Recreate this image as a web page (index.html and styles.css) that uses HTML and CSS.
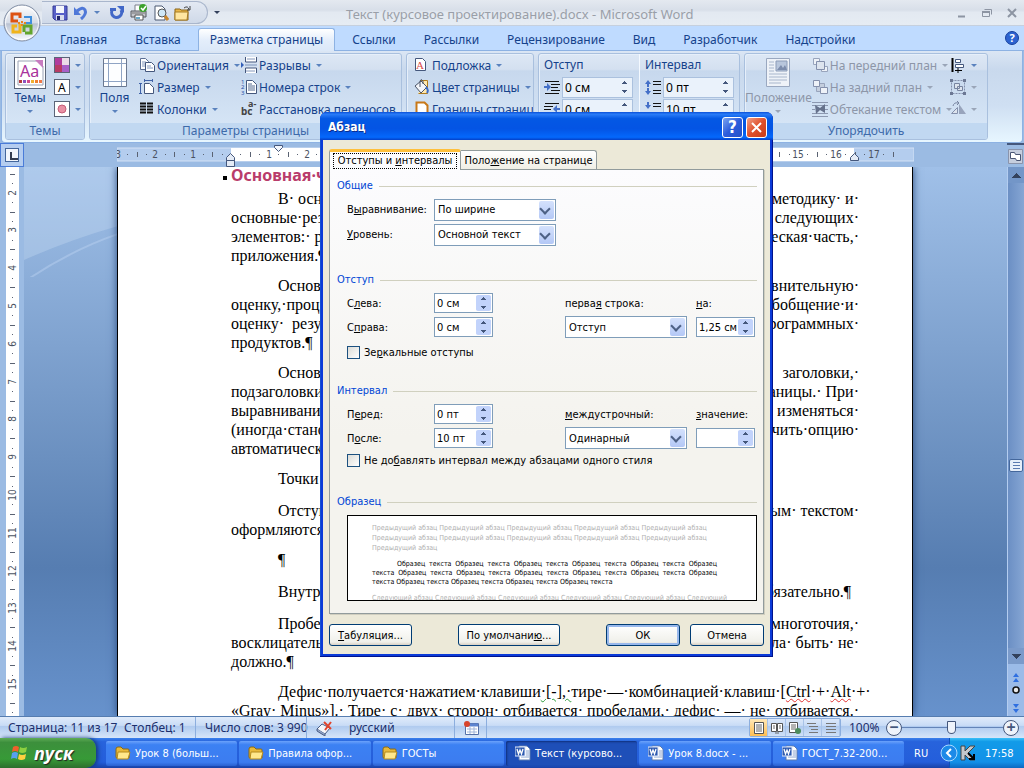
FILE: index.html
```html
<!DOCTYPE html>
<html lang="ru">
<head>
    <meta charset="UTF-8">
    <meta name="viewport" content="width=device-width, initial-scale=1.0">
    <title>Текст (курсовое проектирование).docx - Microsoft Word</title>
    <link rel="stylesheet" href="styles.css">
</head>
<body>

    <svg class="sprite" aria-hidden="true">
        <symbol id="i-folder" viewBox="0 0 16 16">
            <path d="M1 4q0-2 2-2h3l2 2h5q1 0 1 1v8H2q-1 0-1-1z" fill="#e8b93a" stroke="#8a6a14"/>
            <path d="M3 7h12l-2 7H2z" fill="#ffe88c" stroke="#b58a1c"/>
        </symbol>
        <symbol id="i-word" viewBox="0 0 16 16">
            <path d="M4 1h8l3 3v11H4z" fill="#fff" stroke="#5a7ab0"/>
            <path d="M11 6h3M11 8h3M11 10h3M6 12h8" stroke="#8aa4d0"/>
            <rect x="0" y="2" width="10" height="9" fill="#2f5bb0" stroke="#dfe8fa"/>
            <path d="M2 4l1.500 5L5 5l1.500 4L8 4" fill="none" stroke="#fff" stroke-width="1.300"/>
        </symbol>
    </svg>

    <header class="titlebar">
        <button class="office" aria-label="Office">
            <svg width="38" height="38" viewBox="0 0 38 38">
                <defs>
                    <linearGradient id="orb" x1="0" y1="0" x2="0" y2="1"><stop offset="0" stop-color="#fff"/><stop offset=".5" stop-color="#d5dbe6"/><stop offset=".52" stop-color="#b9c2d2"/><stop offset="1" stop-color="#fafcff"/></linearGradient>
                </defs>
                <circle cx="19" cy="19" r="18" fill="url(#orb)" stroke="#7f8ca3"/>
                <circle cx="19" cy="19" r="16.500" fill="none" stroke="#fff" opacity=".8"/>
                <g fill="none" stroke-width="3">
                    <path d="M15 17h-6V10h8v4" stroke="#dd5313"/>
                    <path d="M21 13h7v6h-5" stroke="#3f8fdc" stroke-width="2"/>
                    <path d="M17 20v8h-7v-6h4" stroke="#f0b41c"/>
                    <path d="M21 28v-6h7v7h-6" stroke="#62a52c"/>
                </g>
                <path d="M18 17h2v2h-2zM18 20h2v2h-2zM15 18h2v2h-2zM21 18h2v2h-2z" fill="#e88420"/>
            </svg>
        </button>
        <div class="qat">
            <button aria-label="Сохранить"><svg width="16" height="16" viewBox="0 0 16 16"><path d="M1 1h14v14H3l-2-2z" fill="#5860c8" stroke="#343a94"/><rect x="4" y="1" width="8" height="7" fill="#f4f6fc"/><rect x="4" y="10" width="8" height="5" fill="#d8dcec"/><rect x="5" y="11" width="3" height="4" fill="#22266c"/></svg></button>
            <button aria-label="Отменить"><svg width="16" height="16" viewBox="0 0 16 16"><path d="M4 6q6-5 8-1t-4 9" fill="none" stroke="#4f78d8" stroke-width="3"/><path d="M1 2v8h7z" fill="#4f78d8"/></svg><i class="arr"></i></button>
            <button aria-label="Вернуть"><svg width="16" height="16" viewBox="0 0 16 16"><path d="M4 4a5 5 0 1 0 8 1" fill="none" stroke="#4268c8" stroke-width="3"/><path d="M8 1h7v7z" fill="#4268c8"/><path d="M1 3h6v3H1z" fill="#4268c8"/></svg></button>
            <button aria-label="Печать"><svg width="18" height="18" viewBox="0 0 18 18"><path d="M5 7V1h6v6" fill="#fff" stroke="#7a7f8a"/><path d="M1 7h15v6H1z" fill="#c4c6cc" stroke="#55585f"/><path d="M2 9h13" stroke="#777"/><path d="M5 11h8v5H5z" fill="#fff" stroke="#555"/><path d="M6 13h4v2H6z" fill="#68a8c8"/><circle cx="13" cy="4" r="4" fill="#3ba02c"/><path d="M11 4l2 2 3-4" fill="none" stroke="#fff" stroke-width="1.500"/></svg></button>
            <button aria-label="Просмотр"><svg width="16" height="16" viewBox="0 0 16 16"><path d="M2 1h7l3 3v11H2z" fill="#fff" stroke="#4a5870"/><circle cx="9" cy="8" r="4" fill="#cfe8f8" stroke="#555"/><path d="M12 11l3 4" stroke="#c8862c" stroke-width="3"/></svg></button>
            <button aria-label="Открыть"><svg width="18" height="16" viewBox="0 0 18 16"><path d="M1 4h5l1 1h7v10H1z" fill="#e9b648" stroke="#8a6418"/><path d="M1 7h13l-1 8H1z" fill="#ffe6a0" stroke="#a67c24"/><path d="M10 3q4-3 5 2M16 1v4h-3" fill="none" stroke="#444"/></svg></button>
        </div>
        <button class="more" aria-label="Настройка панели"><i class="arr dark"></i></button>
        <h1>Текст (курсовое проектирование).docx - Microsoft Word</h1>
        <div class="winbtns">
            <button aria-label="Свернуть"><svg width="12" height="12"><path d="M2 9.500h7" stroke="#8d95a3" stroke-width="2"/></svg></button>
            <button aria-label="Восстановить"><svg width="12" height="12"><path d="M3.500 2.500h7v5M1.500 4.500h7v5h-7z" fill="none" stroke="#8d95a3"/><path d="M1 5h8" stroke="#8d95a3" stroke-width="2"/></svg></button>
            <button aria-label="Закрыть"><svg width="12" height="12"><path d="M2 2l8 8M10 2l-8 8" stroke="#8d95a3" stroke-width="2"/></svg></button>
        </div>
    </header>

    <nav class="tabs">
        <a href="#">Главная</a>
        <a href="#">Вставка</a>
        <a href="#" class="active">Разметка страницы</a>
        <a href="#">Ссылки</a>
        <a href="#">Рассылки</a>
        <a href="#">Рецензирование</a>
        <a href="#">Вид</a>
        <a href="#">Разработчик</a>
        <a href="#">Надстройки</a>
        <button class="help" aria-label="Справка">?</button>
    </nav>

    <div class="ribbon">
        <section class="group g-themes">
            <div class="tools">
                <button class="big">
                    <svg width="32" height="32" viewBox="0 0 32 32"><rect x=".5" y=".5" width="31" height="31" fill="#fff" stroke="#5a6478"/><path d="M4 4h20l5 5v19H4z" fill="#fff" stroke="#9aa2b4"/><path d="M21 3h8v8z" fill="#c87cc0"/><text x="6" y="20" font-size="16" fill="#a8329c" font-family="Noto Sans">Aa</text><path d="M5 24.500h3" stroke="#b83c3c" stroke-width="3"/><path d="M9 24.500h3" stroke="#8a54c0" stroke-width="3"/><path d="M13 24.500h3" stroke="#d04a8c" stroke-width="3"/><path d="M17 24.500h3" stroke="#f0b030" stroke-width="3"/><path d="M21 24.500h3" stroke="#f08030" stroke-width="3"/><path d="M25 24.500h3" stroke="#f07848" stroke-width="3"/></svg>
                    <span>Темы</span><i class="arr"></i>
                </button>
                <div class="col">
                    <button class="row"><svg width="16" height="16"><rect width="16" height="16" fill="#5a6478"/><path d="M1 1h7v7H1z" fill="#b03c9c"/><path d="M8 1h7v7H8z" fill="#ecdce8"/><path d="M1 8h7v7H1z" fill="#b83c64"/><path d="M8 8h7v7H8z" fill="#a860c8"/></svg><i class="arr"></i></button>
                    <button class="row"><svg width="16" height="16"><rect x=".5" y=".5" width="15" height="15" fill="#fff" stroke="#5a6478"/><text x="4" y="13" font-size="12" fill="#000" font-family="Noto Sans">A</text></svg><i class="arr"></i></button>
                    <button class="row"><svg width="16" height="16"><rect x=".5" y=".5" width="15" height="15" fill="#fff" stroke="#5a6478"/><circle cx="8" cy="8" r="4" fill="#e890a4" stroke="#c45c78"/></svg><i class="arr"></i></button>
                </div>
            </div>
            <h2>Темы</h2>
        </section>
        <section class="group g-page">
            <div class="tools">
                <button class="big">
                    <svg width="26" height="32" viewBox="0 0 26 32"><path d="M1.500 1.500h23v28h-23z" fill="#fdfeff" stroke="#6a7890"/><path d="M6.500 2v27M19.500 2v27M2 6.500h22M2 24.500h22" stroke="#8fa4c4"/></svg>
                    <span>Поля</span><i class="arr"></i>
                </button>
                <div class="col">
                    <button class="row"><svg width="16" height="16"><path d="M1.500 1.500h5l3 3v8h-8z" fill="#fff" stroke="#5c6f94"/><path d="M3 5h4M3 7h4M3 9h4" stroke="#8498bc"/><path d="M6.500 5.500h6l3 3v6h-9z" fill="#fff" stroke="#44577c"/><path d="M8 9h4M8 11h6" stroke="#8498bc"/></svg><span>Ориентация</span><i class="arr"></i></button>
                    <button class="row"><svg width="16" height="16"><path d="M5 1.500h9M5.500 0v3M13.500 0v3M1.500 4v11M0 4.500h3M0 14.500h3" stroke="#3f62a8"/><path d="M5.500 4.500h5l4 4v6h-9z" fill="#fff" stroke="#44577c"/></svg><span>Размер</span><i class="arr"></i></button>
                    <button class="row"><svg width="16" height="16"><path d="M1 2.500h6M1 5.500h6M1 8.500h6M1 11.500h6M8 2.500h6M8 5.500h6M8 8.500h6M8 11.500h6" stroke="#111" stroke-width="2"/></svg><span>Колонки</span><i class="arr"></i></button>
                </div>
                <div class="col">
                    <button class="row"><svg width="16" height="16"><path d="M4.500 0v5h11V0M4.500 16v-5h11v5" fill="#fff" stroke="#44577c"/><path d="M6 2h8M5 14h9" stroke="#8498bc"/><path d="M0 5v6l3-3z" fill="#3460b8"/><path d="M4 8h12" stroke="#7890b8"/></svg><span>Разрывы</span><i class="arr"></i></button>
                    <button class="row"><svg width="16" height="16"><text x="0" y="5" font-size="6" fill="#2850a8" font-family="Noto Sans">1</text><text x="0" y="10" font-size="6" fill="#2850a8" font-family="Noto Sans">2</text><text x="0" y="16" font-size="6" fill="#2850a8" font-family="Noto Sans">3</text><path d="M5.500 1.500h6l4 4v9h-10z" fill="#fff" stroke="#44577c"/><path d="M7 5h4M7 7h7M7 9h7M7 11h7" stroke="#556a90"/></svg><span>Номера строк</span><i class="arr"></i></button>
                    <button class="row"><svg width="16" height="16"><text x="0" y="14" font-size="10" font-weight="bold" fill="#444" font-family="Noto Sans">bc</text><text x="7" y="6" font-size="9" font-weight="bold" fill="#444" font-family="Noto Sans">a-</text></svg><span>Расстановка переносов</span><i class="arr"></i></button>
                </div>
            </div>
            <h2>Параметры страницы</h2>
        </section>
        <section class="group g-back">
            <div class="tools">
                <div class="col">
                    <button class="row"><svg width="16" height="16"><path d="M1.500 1.500h7l3 3v9h-10z" fill="#fff" stroke="#44577c"/><text x="2" y="12" font-size="11" fill="#d84a4a" font-family="Liberation Serif">A</text></svg><span>Подложка</span><i class="arr"></i></button>
                    <button class="row"><svg width="16" height="16"><path d="M6.500 1.500h7v13h-9" fill="#ffe9b0" stroke="#b07c20"/><path d="M1 7l6-5 6 6-6 6z" fill="#f4f6fa" stroke="#4a5468"/><path d="M6 8V2q1-3 3 0v3" fill="none" stroke="#4a5468"/><path d="M12 8q3 3 1 6" fill="none" stroke="#3c6cc8" stroke-width="2"/></svg><span>Цвет страницы</span><i class="arr"></i></button>
                    <button class="row"><svg width="16" height="16"><path d="M2.500 1.500h8l3 3v10h-11z" fill="#fff" stroke="#c87818" stroke-width="2"/></svg><span>Границы страниц</span></button>
                </div>
            </div>
            <h2>Фон страницы</h2>
        </section>
        <section class="group g-para">
            <div class="tools">
                <div class="col">
                    <span class="cap">Отступ</span>
                    <label class="row"><svg width="16" height="16"><path d="M1 2.500h14M7 5.500h9M7 8.500h7M7 11.500h9M1 14.500h14" stroke="#111"/><path d="M0 7h3V4l4 4-4 4V9H0z" fill="#4470c8"/></svg><span class="rspin"><input type="text" value="0 см" aria-label="Отступ слева"><i></i></span></label>
                    <label class="row"><svg width="16" height="16"><path d="M1 2.500h14M0 5.500h9M0 8.500h7M0 11.500h9M1 14.500h14" stroke="#111"/><path d="M16 7h-3V4L9 8l4 4V9h3z" fill="#4470c8"/></svg><span class="rspin"><input type="text" value="0 см" aria-label="Отступ справа"><i></i></span></label>
                </div>
                <div class="col sep">
                    <span class="cap">Интервал</span>
                    <label class="row"><svg width="16" height="16"><path d="M8 2.500h8M8 5.500h8M8 11.500h8M8 14.500h8" stroke="#111"/><path d="M0 5l3-4 3 4H4v3H2V5zM0 12l3 4 3-4H4V9H2v3z" fill="#4470c8"/></svg><span class="rspin"><input type="text" value="0 пт" aria-label="Интервал до"><i></i></span></label>
                    <label class="row"><svg width="16" height="16"><path d="M8 2.500h8M8 5.500h8M8 11.500h8M8 14.500h8" stroke="#111"/><path d="M0 4l3 4 3-4H4V1H2v3z" fill="#4470c8"/></svg><span class="rspin"><input type="text" value="10 пт" aria-label="Интервал после"><i></i></span></label>
                </div>
            </div>
            <h2>Абзац</h2>
        </section>
        <section class="group g-arrange">
            <div class="tools">
                <button class="big off">
                    <svg width="26" height="32" viewBox="0 0 26 32"><path d="M1.500 1.500h23v28h-23z" fill="#eef2f8" stroke="#9aa8c0"/><path d="M11 4h11v10H11z" fill="#b8c6dc" stroke="#8c9cb8"/><path d="M12 13l4-5 2 3 2-3 2 5z" fill="#7c8cac"/><path d="M4 5h5M4 8h5M4 11h5M4 14h5M4 17h18M4 20h18M4 23h18M4 26h12" stroke="#a8b6cc"/></svg>
                    <span>Положение</span><i class="arr"></i>
                </button>
                <div class="col">
                    <button class="row off"><svg width="16" height="16"><path d="M1.500 1.500h6v6h-6zM9.500 9.500h6v5h-6z" fill="#eef2f8" stroke="#98a4bc"/><path d="M4.500 4.500h8v8h-8z" fill="#dde4ee" stroke="#8490ac"/></svg><span>На передний план</span><i class="arr"></i></button>
                    <button class="row off"><svg width="16" height="16"><path d="M4.500 4.500h8v8h-8z" fill="#c4cede" stroke="#98a4bc"/><path d="M1.500 1.500h6v6h-6zM8.500 8.500h7v6h-7z" fill="#eef2f8" stroke="#8490ac"/></svg><span>На задний план</span><i class="arr"></i></button>
                    <button class="row off"><svg width="16" height="16"><path d="M0 1.500h16M0 4.500h16M0 12.500h16M0 15.500h16M0 8.500h3M13 8.500h3" stroke="#8c98b0"/><path d="M3 4l5 3 5-4v9l-5-3-4 4z" fill="#66728c"/></svg><span>Обтекание текстом</span><i class="arr"></i></button>
                </div>
                <div class="col">
                    <button class="row"><svg width="16" height="16"><path d="M2.500 1v14" stroke="#000" stroke-width="2"/><path d="M5.500 2.500h5v3h-5zM5.500 7.500h8v3h-8z" fill="#fff" stroke="#44577c"/><path d="M5 13.500h7M8 11v5" stroke="#000"/></svg><i class="arr"></i></button>
                    <button class="row off"><svg width="16" height="16"><path d="M1.500 1.500h13v13h-13z" fill="none" stroke="#8490ac" stroke-dasharray="2 1"/><path d="M4.500 4.500h5v5h-5zM7.500 7.500h5v4h-5z" fill="#dde4ee" stroke="#7884a0"/><path d="M0 0h3v3H0zM13 0h3v3h-3zM0 13h3v3H0zM13 13h3v3h-3z" fill="#6c7894"/></svg><i class="arr"></i></button>
                    <button class="row off"><svg width="16" height="16"><path d="M1.500 12.500l6-6v6z" fill="#dde4ee" stroke="#8490ac"/><path d="M9 3v10h7z" fill="#98a4bc"/><path d="M3 5q1-4 5-3M7 0l2 2-2 2" fill="none" stroke="#7884a0"/></svg><i class="arr"></i></button>
                </div>
            </div>
            <h2>Упорядочить</h2>
        </section>
    </div>

    <main class="work">
        <div class="tabsel"><span></span></div>
        <div class="hruler"><svg id="hruler" width="797" height="24"></svg></div>
        <div class="toggle"><svg width="15" height="15"><path d="M.5.500h14v14H.5z" fill="#c6cede" stroke="#8a94ac"/><path d="M2.500 3.500h4l1 2h5v6h-4l-1-2h-5z" fill="#fff" stroke="#4a5674"/></svg></div>
        <div class="vruler"><svg id="vruler" width="24" height="900"></svg></div>

        <div class="desk">
            <svg class="swoosh" viewBox="0 0 94 110" aria-hidden="true">
                <path d="M0 0h94v59Q45 73 0 93z" fill="#c8dcf4" opacity=".35"/>
                <path d="M0 115Q45 84 94 67" fill="none" stroke="#b8d0f0" stroke-width="2" opacity=".5"/>
            </svg>
            <article class="page">
                <h3>Основная·часть</h3>
                <div class="para">
                    <p><span>В· основной·</span><span>методику· и·</span></p>
                    <p><span>основные·результаты</span><span>следующих·</span></p>
                    <p><span>элементов:· раздел</span><span>теоретическая·часть,·</span></p>
                    <p><span>приложения.¶</span></p>
                </div>
                <div class="para">
                    <p><span>Основная</span><span>сравнительную·</span></p>
                    <p><span>оценку,·процесс</span><span>обобщение·и·</span></p>
                    <p><span>оценку·&nbsp; результатов</span><span>программных·</span></p>
                    <p><span>продуктов.¶</span></p>
                </div>
                <div class="para">
                    <p><span>Основные</span><span>заголовки,·</span></p>
                    <p><span>подзаголовки</span><span>страницы.· При·</span></p>
                    <p><span>выравнивании</span><span>изменяться·</span></p>
                    <p><span>(иногда·становится</span><span>включить·опцию·</span></p>
                    <p><span>автоматической</span></p>
                </div>
                <div class="para single">
                    <p><span>Точки</span></p>
                </div>
                <div class="para">
                    <p><span>Отступ</span><span>основным· текстом·</span></p>
                    <p><span>оформляются</span></p>
                </div>
                <div class="para single">
                    <p><span>¶</span></p>
                </div>
                <div class="para single">
                    <p><span>Внутри</span><span>обязательно.¶&nbsp;&nbsp;</span></p>
                </div>
                <div class="para">
                    <p><span>Пробел</span><span>многоточия,·</span></p>
                    <p><span>восклицательный</span><span>пробела· быть· не·</span></p>
                    <p><span>должно.¶</span></p>
                </div>
                <div class="para">
                    <p><span>Дефис·</span><span>получается·</span><span>нажатием·</span><span>клавиши<span class="grammar">·[-],·</span></span><span>тире·</span><span>—·</span><span>комбинацией·</span><span>клавиш·</span><span>[<span class="spell">Ctrl</span>·</span><span>+·</span><span><span class="spell">Alt</span>·</span><span>+·</span></p>
                    <p><span>«Gray·</span><span>Minus»].·</span><span>Тире·</span><span>с·</span><span>двух·</span><span>сторон·</span><span>отбивается·</span><span>пробелами,·</span><span>дефис·</span><span>—·</span><span>не·</span><span>отбивается.·</span></p>
                </div>
            </article>
        </div>

        <div class="scroll">
            <i class="up"></i>
            <div class="track"><div class="thumb"></div></div>
            <i class="down"></i>
            <svg width="16" height="52"><path d="M5 13l3-4 3 4zM5 18l3-4 3 4zM5 40l3 4 3-4zM5 45l3 4 3-4z" fill="#2f6fe0"/><circle cx="8" cy="26" r="3" fill="#e8e8e8" stroke="#111" stroke-width="1.500"/></svg>
        </div>
    </main>

    <footer class="status">
        <span class="st-page">Страница: 11 из 17</span>
        <span class="st-col">Столбец: 1</span>
        <span class="st-words">Число слов: 3 990</span>
        <span class="st-lang"><svg width="18" height="16"><path d="M1 9l5-5 8 4-5 6z" fill="#f4f6fa" stroke="#4a5c84"/><path d="M1 9v2l8 5v-2" fill="#90a4c8" stroke="#4a5c84"/><path d="M8 2l7 7M15 2l-6 8" stroke="#e0442c" stroke-width="2"/></svg>русский</span>
        <span class="st-macro"><svg width="16" height="14"><path d="M1.500 2.500h13v11h-13z" fill="#fff" stroke="#5470a8"/><path d="M2 4h12" stroke="#5c84d0" stroke-width="3"/><path d="M3 8h10M3 11h10M6 6v7M10 6v7" stroke="#a0b4d8"/><circle cx="3" cy="3" r="3" fill="#d8442c"/></svg></span>
        <div class="views">
            <button class="on" aria-label="Разметка страницы"><svg width="12" height="12"><path d="M1.500.500h9v11h-9z" fill="#fff" stroke="#555"/><path d="M3 3h6M3 5h6M3 7h6M3 9h6" stroke="#666"/></svg></button>
            <button aria-label="Режим чтения"><svg width="12" height="12"><path d="M.5 1.500h5v8h-5zM6.500 1.500h5v8h-5z" fill="#fff" stroke="#555"/><path d="M2 4h2M2 6h2M8 4h2M8 6h2M4 11h4" stroke="#666"/></svg></button>
            <button aria-label="Веб-документ"><svg width="12" height="12"><path d="M.5.500h8v10h-8z" fill="#fff" stroke="#555"/><path d="M2 3h5M2 5h5M2 7h5" stroke="#666"/><circle cx="9" cy="9" r="3" fill="#4c8c5c"/></svg></button>
            <button aria-label="Структура"><svg width="12" height="12"><path d="M0 1.500h9M2 4.500h9M4 7.500h7M2 10.500h9" stroke="#777"/></svg></button>
            <button aria-label="Черновик"><svg width="12" height="12"><path d="M1 1.500h10M1 4.500h10M1 7.500h10M1 10.500h10" stroke="#777"/></svg></button>
        </div>
        <span class="pct">100%</span>
        <button class="zoom" aria-label="Уменьшить">−</button>
        <input class="slider" type="range" min="0" max="100" value="49" aria-label="Масштаб">
        <button class="zoom" aria-label="Увеличить">+</button>
    </footer>

    <div class="taskbar">
        <button class="start"><svg width="20" height="20" viewBox="0 0 20 20"><path d="M3 4q3-2 6 0L8 9Q5 7 2 9z" fill="#f0602c"/><path d="M10 4q3 2 7 0l-1 5q-4 2-7 0z" fill="#8cd040"/><path d="M2 10q3-2 6 0l-1 6q-3-2-6 0z" fill="#58a0f0"/><path d="M9 11q3 2 7 0l-1 5q-4 2-7 0z" fill="#ffd040"/></svg>пуск</button>
        <div class="tasks">
            <button><svg width="16" height="16"><use href="#i-folder"/></svg>Урок 8 (больш...</button>
            <button><svg width="16" height="16"><use href="#i-folder"/></svg>Правила офор...</button>
            <button><svg width="16" height="16"><use href="#i-folder"/></svg>ГОСТы</button>
            <button class="active"><svg width="16" height="16"><use href="#i-word"/></svg>Текст (курсово...</button>
            <button><svg width="16" height="16"><use href="#i-word"/></svg>Урок 8.docx - ...</button>
            <button><svg width="16" height="16"><use href="#i-word"/></svg>ГОСТ_7.32-200...</button>
        </div>
        <span class="lang">RU</span>
        <div class="tray">
            <svg class="chev" width="18" height="18"><circle cx="9" cy="9" r="8" fill="#1c8ae8" stroke="#a8d8ff"/><path d="M11 5L7 9l4 4" fill="none" stroke="#fff" stroke-width="2"/></svg>
            <svg width="16" height="16"><path d="M1 1h4v5l5-5h5L8 8l7 7h-5L5 10v5H1z" fill="#c4c8cc" stroke="#444"/><path d="M8 8l5 5M14 9v5H9" fill="none" stroke="#000" stroke-width="2"/></svg>
            <time>17:58</time>
        </div>
    </div>

    <form class="dialog" role="dialog" aria-labelledby="dlg-title">
        <div class="dlg-head">
            <h2 id="dlg-title">Абзац</h2>
            <button type="button" class="q" aria-label="Справка">?</button>
            <button type="button" class="x" aria-label="Закрыть"><svg width="19" height="19"><path d="M5 5l9 9M14 5l-9 9" stroke="#fff" stroke-width="2"/></svg></button>
        </div>
        <div class="dlg-body">
            <div class="dlg-tabs">
                <button type="button" class="active"><span>Отступы и <u>и</u>нтервалы</span></button>
                <button type="button">Поло<u>ж</u>ение на странице</button>
            </div>
            <div class="panel">
                <fieldset class="f-common">
                    <legend>Общие</legend>
                    <div class="line">
                        <label for="align">В<u>ы</u>равнивание:</label>
                        <span class="combo"><select id="align"><option>По ширине</option></select></span>
                    </div>
                    <div class="line">
                        <label for="level"><u>У</u>ровень:</label>
                        <span class="combo"><select id="level"><option>Основной текст</option></select></span>
                    </div>
                </fieldset>
                <fieldset class="f-indent">
                    <legend>Отступ</legend>
                    <div class="line">
                        <label for="left">С<u>л</u>ева:</label>
                        <span class="spin"><input type="text" id="left" value="0 см"><i></i></span>
                        <label for="first">перва<u>я</u> строка:</label>
                        <label for="by"><u>н</u>а:</label>
                    </div>
                    <div class="line">
                        <label for="right">С<u>п</u>рава:</label>
                        <span class="spin"><input type="text" id="right" value="0 см"><i></i></span>
                        <span class="combo"><select id="first"><option>Отступ</option></select></span>
                        <span class="spin"><input type="text" id="by" value="1,25 см"><i></i></span>
                    </div>
                    <label class="check"><input type="checkbox"><span>Зе<u>р</u>кальные отступы</span></label>
                </fieldset>
                <fieldset class="f-spacing">
                    <legend>Интервал</legend>
                    <div class="line">
                        <label for="before">П<u>е</u>ред:</label>
                        <span class="spin"><input type="text" id="before" value="0 пт"><i></i></span>
                        <label for="leading"><u>м</u>еждустрочный:</label>
                        <label for="value"><u>з</u>начение:</label>
                    </div>
                    <div class="line">
                        <label for="after">П<u>о</u>сле:</label>
                        <span class="spin"><input type="text" id="after" value="10 пт"><i></i></span>
                        <span class="combo"><select id="leading"><option>Одинарный</option></select></span>
                        <span class="spin"><input type="text" id="value"><i></i></span>
                    </div>
                    <label class="check"><input type="checkbox"><span>Не до<u>б</u>авлять интервал между абзацами одного стиля</span></label>
                </fieldset>
                <fieldset class="f-preview">
                    <legend>Образец</legend>
                    <div class="preview">
                        <p>Предыдущий абзац Предыдущий абзац Предыдущий абзац Предыдущий абзац Предыдущий абзац<br>Предыдущий абзац Предыдущий абзац Предыдущий абзац Предыдущий абзац Предыдущий абзац<br>Предыдущий абзац</p>
                        <p class="sample">Образец текста Образец текста Образец текста Образец текста Образец текста Образец текста Образец текста Образец текста Образец текста Образец текста Образец текста Образец текста Образец текста Образец текста Образец текста Образец текста</p>
                        <p>Следующий абзац Следующий абзац Следующий абзац Следующий абзац Следующий абзац Следующий</p>
                    </div>
                </fieldset>
            </div>
            <div class="dlg-foot">
                <button type="button" class="b-tab"><u>Т</u>абуляция...</button>
                <button type="button" class="b-def">По умолчани<u>ю</u>...</button>
                <button type="button" class="b-ok">ОК</button>
                <button type="button" class="b-cancel">Отмена</button>
            </div>
        </div>
    </form>

    <script src="script.js"></script>
</body>
</html>
```
FILE: styles.css
```css
* {
    box-sizing: border-box;
}
body {
    margin: 0;
    height: 100vh;
    display: flex;
    flex-direction: column;
    position: relative;
    overflow: hidden;
    font-family: "Noto Sans", "Open Sans", sans-serif;
    font-size: 12px;
    color: #15428b;
    background: #9bbbe3;
}
button {
    font: inherit;
    color: inherit;
    background: none;
    border: 0;
    padding: 0;
}
h1, h2, h3, p, fieldset {
    margin: 0;
    padding: 0;
    font-weight: normal;
}
svg {
    flex: none;
    display: block;
}
.sprite {
    display: none;
}
.arr {
    flex: none;
    width: 0;
    height: 0;
    border: 3px solid transparent;
    border-top-color: #5a82be;
    border-bottom: 0;
}
.arr.dark {
    border-top-color: #33415c;
}

/* title bar */
.titlebar {
    flex: none;
    height: 26px;
    display: flex;
    align-items: center;
    position: relative;
    padding-left: 42px;
    background: linear-gradient(#e4e9f0, #d8dfe9 40%, #e3e9f1 50%, #e6ecf3);
    border-bottom: 1px solid #c6d0de;
}
.office {
    position: absolute;
    left: 3px;
    top: 4px;
    z-index: 2;
}
.qat {
    height: 23px;
    width: 166px;
    display: flex;
    align-items: center;
    gap: 5px;
    padding-left: 10px;
    border: 1px solid #a9b6cc;
    border-left: 0;
    border-radius: 0 12px 12px 0;
    background: linear-gradient(#e3e9f3, #cfd9e8);
}
.qat button {
    display: flex;
    align-items: center;
    gap: 5px;
}
.qat button:nth-child(2) {
    margin-right: 4px;
}
.more {
    padding: 3px 6px;
}
.more .arr {
    display: block;
    box-shadow: 0 -5px 0 -3px #33415c;
}
.titlebar h1 {
    flex: 1;
    padding-left: 120px;
    padding-top: 3px;
    font-size: 13px;
    color: #9a9fa8;
    white-space: nowrap;
}
.winbtns {
    display: flex;
    gap: 13px;
    padding-right: 6px;
}

/* ribbon tabs */
.tabs {
    flex: none;
    height: 25px;
    display: flex;
    gap: 6px;
    padding: 2px 5px 0 49px;
    background: #bfdbff;
    border-bottom: 1px solid #8db2e3;
}
.tabs a {
    height: 23px;
    padding: 0 11px;
    line-height: 23px;
    color: #15428b;
    text-decoration: none;
    white-space: nowrap;
}
.tabs a.active {
    border: 1px solid #8db2e3;
    border-bottom: 0;
    border-radius: 3px 3px 0 0;
    background: linear-gradient(#fff, #e4eefb 50%, #dbe8f8);
    line-height: 22px;
}
.help {
    margin: 3px 0 0 auto;
    width: 14px;
    height: 14px;
    border-radius: 50%;
    border: 1px solid #16409c;
    background: #2c62d0;
    color: #fff;
    font-size: 11px;
    font-weight: bold;
    line-height: 12px;
}

/* ribbon */
.ribbon {
    flex: none;
    height: 92px;
    display: flex;
    gap: 4px;
    margin: 0 1px;
    padding: 2px 3px;
    border: 1px solid #8db2e3;
    border-top: 0;
    border-radius: 0 0 4px 4px;
    background: linear-gradient(#dbe6f4, #c9d9ed 20%, #cfdff2 60%, #e7f6ff);
}
.group {
    flex: none;
    display: flex;
    flex-direction: column;
    overflow: hidden;
    border: 1px solid #a9c0de;
    border-radius: 3px;
    box-shadow: inset 1px 1px 0 #e6effa;
    background: linear-gradient(#dde8f5, #d4e0f0 18%, #c7d8ed 20%, #d9e8f8);
}
.g-themes { width: 80px; }
.g-page { width: 313px; }
.g-back { width: 128px; }
.g-para { width: 202px; }
.g-arrange { width: 244px; }
.tools {
    flex: 1;
    display: flex;
}
.group h2 {
    height: 16px;
    font-size: 12px;
    line-height: 16px;
    text-align: center;
    color: #3e6aaa;
    background: #c1d8f1;
}
.big {
    width: 46px;
    display: flex;
    flex-direction: column;
    align-items: center;
    padding-top: 3px;
}
.big span {
    line-height: 18px;
}
.big .arr {
    margin-top: 3px;
}
.off {
    color: #8d96a8;
}
.off .arr {
    border-top-color: #9aa5b8;
}
.col {
    display: flex;
    flex-direction: column;
}
.row {
    height: 22px;
    display: flex;
    align-items: center;
    gap: 2px;
    white-space: nowrap;
}
.row .arr {
    margin-left: 3px;
}
.g-themes .big { width: 48px; }
.g-page .big { width: 49px; }
.g-page .col { width: 102px; }
.g-back .col { padding-left: 7px; }
.g-arrange .big { width: 72px; }
.g-arrange .col { width: 138px; }
.g-para .col {
    width: 101px;
    padding-left: 5px;
}
.g-para .sep {
    border-left: 1px solid #f4f9ff;
}
.cap {
    height: 22px;
    line-height: 22px;
}
.rspin {
    display: flex;
    align-items: center;
    width: 71px;
    height: 21px;
    border: 1px solid #abc1de;
    background: #eaf2fb;
}
.rspin input {
    flex: 1;
    min-width: 0;
    border: 0;
    padding: 0 2px;
    background: none;
    font: inherit;
    color: #000;
}
.rspin i, .spin i {
    flex: none;
    width: 16px;
    height: 12px;
    background:
        conic-gradient(from 135deg at 50% 0, #44577c 90deg, transparent 0) center top / 7px 3px no-repeat,
        conic-gradient(from -45deg at 50% 100%, #44577c 90deg, transparent 0) center bottom / 7px 3px no-repeat;
}

/* work area */
.work {
    flex: 1;
    min-height: 0;
    display: grid;
    grid-template-columns: 24px 1fr 17px;
    grid-template-rows: 24px 1fr;
}
.tabsel {
    display: grid;
    place-items: center;
    border: 1px solid #4a7cd8;
    background: #b4cdf0;
}
.tabsel span {
    width: 14px;
    height: 14px;
    border: 1px solid #44679c;
    background: #f2f6fc;
}
.tabsel span::before {
    content: "";
    display: block;
    width: 6px;
    height: 6px;
    margin: 3px 0 0 4px;
    border: solid #333c50;
    border-width: 0 0 2px 2px;
}
.hruler {
    padding-left: 93px;
    overflow: hidden;
}
.toggle {
    border-top: 2px solid #44577c;
    padding: 4px 1px 0;
}
.vruler {
    overflow: hidden;
}
.hruler text, .vruler text {
    font-family: "DejaVu Sans Condensed", "DejaVu Sans", sans-serif;
    font-size: 10px;
    fill: #4a5262;
}
.desk {
    position: relative;
    min-height: 0;
    overflow: hidden;
    padding: 0 94px 0 93px;
    background: linear-gradient(#a0c0e8, #6b90c0 53%, #567db1 73%, #6792cc);
}
.swoosh {
    position: absolute;
    left: 0;
    top: 0;
    width: 94px;
    height: 110px;
}
.page {
    position: relative;
    height: 100%;
    padding: 0 53px 0 113px;
    overflow: hidden;
    border: solid #000;
    border-width: 0 1px;
    background: #fff;
    box-shadow: 0 0 8px #2a4a7c;
    font-family: "Liberation Serif", serif;
    font-size: 16px;
    color: #000;
}
.page h3 {
    height: 22px;
    line-height: 17px;
    font-family: "Noto Sans", sans-serif;
    font-size: 16px;
    font-weight: bold;
    color: #b93c6b;
}
.page h3::before {
    content: "";
    float: left;
    width: 4px;
    height: 4px;
    margin: 9px 0 0 -8px;
    background: #000;
}
.para {
    margin-bottom: 11px;
    line-height: 19px;
}
.para.single {
    margin-bottom: 13px;
}
.para p {
    display: flex;
    justify-content: space-between;
    white-space: nowrap;
}
.para p:first-child {
    padding-left: 47px;
}
.spell {
    text-decoration: underline wavy #e03030 1px;
}
.grammar {
    text-decoration: underline wavy #2c9c3c 1px;
}
.scroll {
    display: flex;
    flex-direction: column;
    align-items: center;
    border-left: 1px solid #b4cdf0;
    background: #9bbbe8;
}
.scroll .up, .scroll .down {
    width: 100%;
    height: 16px;
    background: #7396c8 conic-gradient(from 135deg at 50% 0, #33415c 90deg, transparent 0) center / 9px 5px no-repeat;
}
.scroll .down {
    background: #7a9aca conic-gradient(from -45deg at 50% 100%, #33415c 90deg, transparent 0) center / 9px 5px no-repeat;
}
.track {
    flex: 1;
    width: 100%;
    padding-top: 276px;
    background: linear-gradient(90deg, #6b8fc4, #86a6d4);
}
.thumb {
    height: 13px;
    margin: 0 1px;
    border: 1px solid #44679c;
    border-radius: 2px;
    background: repeating-linear-gradient(#5a7ab0 0 1px, #eaf1fb 1px 3px) center / 7px 7px no-repeat, #e4edf9;
}

/* status bar */
.status {
    flex: none;
    height: 22px;
    display: flex;
    align-items: center;
    padding: 0 5px 0 8px;
    border-top: 1px solid #567db0;
    background: linear-gradient(#e0ebfa, #c9dcf6 40%, #b0cbef 45%, #d6e5f9);
    color: #1c2f6c;
    white-space: nowrap;
}
.status > span {
    display: flex;
    align-items: center;
    height: 100%;
}
.st-page { width: 116px; }
.st-col { width: 71px; }
.st-words { width: 111px; }
.st-lang { width: 148px; gap: 15px; }
.st-macro { width: 33px; }
.status .st-words, .status .st-lang, .status .st-macro {
    padding-left: 9px;
    border-left: 1px solid #8caede;
}
.status .st-macro {
    border-right: 1px solid #8caede;
}
.views {
    margin-left: auto;
    display: flex;
    border: 1px solid #8caede;
    border-radius: 2px;
}
.views button {
    width: 18px;
    height: 17px;
    display: grid;
    place-items: center;
    border-right: 1px solid #a9c3e8;
}
.views .on {
    background: linear-gradient(#ffe8b8, #ffbe50);
}
.status .pct {
    width: 45px;
    padding-left: 8px;
}
.zoom {
    width: 16px;
    height: 16px;
    border: 1px solid #44577c;
    border-radius: 50%;
    background: #eef3fb;
    font-size: 16px;
    font-weight: bold;
    line-height: 13px;
    color: #44577c;
}
.slider {
    appearance: none;
    width: 101px;
    height: 16px;
    margin: 0;
    background: linear-gradient(#6484b8, #6484b8) center / 100% 1px no-repeat;
}
.slider::-webkit-slider-thumb {
    appearance: none;
    width: 9px;
    height: 13px;
    border: 1px solid #44577c;
    border-radius: 1px 1px 5px 5px;
    background: #eef3fb;
}

/* taskbar */
.taskbar {
    flex: none;
    height: 30px;
    display: flex;
    align-items: center;
    background: linear-gradient(#3a80ec, #2763dc 12%, #245edb 80%, #1941a5);
    color: #fff;
    font-family: "DejaVu Sans Condensed", "DejaVu Sans", sans-serif;
    font-size: 11px;
    white-space: nowrap;
}
.start {
    width: 96px;
    height: 30px;
    display: flex;
    align-items: center;
    gap: 4px;
    padding-left: 10px;
    border-radius: 0 10px 10px 0;
    background: linear-gradient(#5eac56, #3c8f3c 15%, #379a37 70%, #2d6e2d);
    box-shadow: 2px 0 4px #14387c;
    font-family: "Open Sans", sans-serif;
    font-size: 18px;
    font-weight: bold;
    font-style: italic;
    line-height: 18px;
    text-shadow: 1px 1px 1px #222;
}
.tasks {
    flex: 1;
    display: grid;
    grid-template-columns: repeat(6, 1fr);
    gap: 2px;
    padding: 0 8px 0 10px;
}
.tasks button {
    height: 25px;
    display: flex;
    align-items: center;
    gap: 4px;
    padding-left: 9px;
    border-radius: 2px;
    background: linear-gradient(#6ba2fb, #3c81f3 15%, #3c7cf0 85%, #2a60d0);
    overflow: hidden;
}
.tasks button.active {
    background: #1e4fb8;
    box-shadow: inset 1px 1px 2px #10307c;
}
.lang {
    width: 37px;
    padding-left: 2px;
}
.tray {
    height: 30px;
    width: 75px;
    display: flex;
    align-items: center;
    gap: 2px;
    border-left: 1px solid #0a50b8;
    background: linear-gradient(#3cc0f8, #129be8 12%, #1290e8 80%, #0c68c0);
}
.tray .chev {
    margin-left: -10px;
}
.tray time {
    margin-left: 7px;
}

/* paragraph dialog */
.dialog {
    position: absolute;
    left: 320px;
    top: 112px;
    width: 453px;
    padding: 0 3px 3px;
    border-radius: 7px 7px 0 0;
    background: #0a3ad8;
    box-shadow: inset -1px -1px 0 #00138c, inset 1px 0 0 #1450d0;
    color: #000;
    font-family: "DejaVu Sans Condensed", "DejaVu Sans", sans-serif;
    font-size: 11px;
    white-space: nowrap;
}
.dlg-head {
    height: 28px;
    display: flex;
    align-items: center;
    gap: 3px;
    margin: 0 -3px;
    padding: 2px 6px 0 8px;
    border-radius: 7px 7px 0 0;
    background: linear-gradient(#0a50d8, #2a7cf8 8%, #0458e4 24%, #0454e4 60%, #0468fc 90%, #0440c8);
    color: #fff;
}
.dlg-head h2 {
    flex: 1;
    font-size: 12px;
    font-weight: bold;
    text-shadow: 1px 1px 0 #0a2c8c;
}
.dlg-head button {
    width: 21px;
    height: 21px;
    border: 1px solid #fff;
    border-radius: 3px;
    background: linear-gradient(135deg, #7ca4f0, #2c5cdc 50%, #2450c8);
    font-size: 17px;
    font-weight: bold;
    line-height: 19px;
}
.dlg-head button.x {
    background: linear-gradient(135deg, #f0a088, #e0502c 50%, #c83c18);
}
.dlg-body {
    padding: 9px 6px 8px;
    background: #ece9d8;
}
.dlg-tabs {
    display: flex;
    align-items: flex-end;
    height: 20px;
}
.dlg-tabs button {
    width: 136px;
    height: 19px;
    border: 1px solid #919b9c;
    border-left: 0;
    border-bottom: 0;
    border-radius: 0 3px 0 0;
    background: linear-gradient(#fff, #f0efe6);
}
.dlg-tabs button.active {
    position: relative;
    width: 132px;
    height: 21px;
    margin-bottom: -1px;
    padding: 1px 3px;
    border-left: 1px solid #919b9c;
    border-top: 3px solid #ffc03c;
    border-radius: 3px 3px 0 0;
    background: #fcfcfe;
    line-height: 14px;
}
.dlg-tabs .active span {
    display: block;
    border: 1px dotted #000;
}
.panel {
    height: 445px;
    padding: 9px 6px 0 7px;
    border: 1px solid #919b9c;
    box-shadow: 1px 1px 0 #d0cebf;
    background: linear-gradient(#fcfcfe, #f4f3ee 60%);
}
.panel fieldset {
    border: 0;
    min-width: 0;
}
legend {
    width: 100%;
    height: 14px;
    display: flex;
    align-items: center;
    gap: 6px;
    padding: 0;
    color: #0046d5;
    line-height: 14px;
}
legend::after {
    content: "";
    flex: 1;
    height: 1px;
    background: #d0d0bf;
}
.f-common { height: 94px; }
.f-indent { height: 111px; }
.f-spacing { height: 111px; }
.line {
    display: grid;
    grid-template-columns: 87px 131px 131px 59px;
    align-items: center;
    height: 24px;
    padding-left: 10px;
}
.f-common .line {
    height: 25px;
}
.f-common legend {
    margin-bottom: 4px;
}
.f-indent legend, .f-spacing legend {
    margin-bottom: 4px;
}
.combo {
    width: 122px;
    height: 22px;
    position: relative;
    border: 1px solid #7f9db9;
    background: #fff;
}
.combo::after {
    content: "";
    position: absolute;
    right: 1px;
    top: 1px;
    width: 15px;
    height: 18px;
    border-radius: 2px;
    background: linear-gradient(#d4e1fc, #b4c8f6);
}
.combo::before {
    content: "";
    position: absolute;
    z-index: 1;
    right: 6px;
    top: 5px;
    width: 6px;
    height: 6px;
    border: solid #4d6185;
    border-width: 0 2px 2px 0;
    transform: rotate(45deg);
}
.combo select {
    appearance: none;
    width: 100%;
    height: 20px;
    border: 0;
    padding: 0 3px;
    background: none;
    font: inherit;
    color: #000;
}
.spin {
    display: flex;
    align-items: center;
    width: 59px;
    height: 20px;
    padding-right: 1px;
    border: 1px solid #7f9db9;
    background: #fff;
}
.spin input {
    flex: 1;
    min-width: 0;
    padding: 0 0 0 2px;
    border: 0;
    background: none;
    font: inherit;
    color: #000;
}
.spin i {
    width: 15px;
    height: 16px;
    border: solid #c2d3fb;
    border-width: 2px 0;
    border-radius: 2px;
    background-color: #c2d3fb;
}
.check {
    display: flex;
    align-items: center;
    gap: 4px;
    height: 20px;
    padding-left: 10px;
    margin-top: 3px;
}
.f-spacing .check {
    margin-top: 0;
}
.check input {
    appearance: none;
    width: 13px;
    height: 13px;
    margin: 0;
    border: 1px solid #1c5180;
    background: linear-gradient(135deg, #dcdcd7, #fff);
}
.preview {
    height: 86px;
    margin: 6px 0 0 10px;
    padding: 7px 39px 0 24px;
    overflow: hidden;
    border: 1px solid #000;
    background: #fff;
    font-size: 7px;
    line-height: 10px;
    color: #b0b0b0;
}
.preview .sample {
    margin: 7px 0 6px;
    line-height: 9px;
    text-indent: 25px;
    text-align: justify;
    white-space: normal;
    color: #000;
}
.dlg-foot {
    display: flex;
    margin-top: 10px;
}
.dlg-foot button {
    height: 22px;
    border: 1px solid #003c74;
    border-radius: 3px;
    background: linear-gradient(#fff, #f0f0ea 85%, #d8d0c4);
}
.b-tab { width: 83px; }
.b-def { width: 102px; margin-left: 46px; }
.b-ok { width: 74px; margin-left: auto; }
.b-cancel { width: 74px; margin-left: 10px; }
.dlg-foot .b-ok {
    box-shadow: inset 0 0 0 2px #98b8ec;
}
```
FILE: script.js
```js
var NS = "http://www.w3.org/2000/svg";
var CM = 37.8;

function add(svg, tag, attrs, text) {
    var el = document.createElementNS(NS, tag);
    for (var key in attrs) {
        el.setAttribute(key, attrs[key]);
    }
    if (text !== undefined) {
        el.textContent = text;
    }
    svg.appendChild(el);
}

// quarter marks are dots, half marks are ticks, whole ones are numbers
function drawScale(svg, zero, from, to, vertical) {
    for (var q = from * 4; q <= to * 4; q++) {
        var pos = Math.round(zero + q * CM / 4);
        if (q === 0) continue;
        if (q % 4 === 0) {
            var n = Math.abs(q / 4);
            if (vertical) {
                add(svg, "text", { x: 0, y: 0, "text-anchor": "middle", transform: "translate(16," + pos + ") rotate(-90)" }, n);
            } else {
                add(svg, "text", { x: pos, y: 15, "text-anchor": "middle" }, n);
            }
        } else {
            var len = q % 2 === 0 ? 5 : 1;
            var box = vertical
                ? { x: 12 - (len >> 1), y: pos, width: len, height: 1 }
                : { x: pos, y: 11 - (len >> 1), width: 1, height: len };
            box.fill = "#5a6272";
            add(svg, "rect", box);
        }
    }
}

var h = document.getElementById("hruler");
add(h, "rect", { x: 0, y: 5, width: 797, height: 13, fill: "#b4cdee", stroke: "#d4e2f6" });
add(h, "rect", { x: 114, y: 5, width: 623, height: 13, fill: "#fff" });
drawScale(h, 114, -3, 17.5, false);
add(h, "path", { d: "M157.500 2.500h8v2l-4 4-4-4z", fill: "#f2f6fc", stroke: "#44577c" });
add(h, "path", { d: "M109.500 23.500v-6h8v6zM109.500 17.500v-3l4-4 4 4v3z", fill: "#e4ebf6", stroke: "#44577c" });
add(h, "path", { d: "M733.500 17.500v-3l4-4 4 4v3z", fill: "#e4ebf6", stroke: "#44577c" });

var v = document.getElementById("vruler");
add(v, "rect", { x: 6, y: 0, width: 13, height: 900, fill: "#fff" });
drawScale(v, -50, 1.5, 20, true);
```
